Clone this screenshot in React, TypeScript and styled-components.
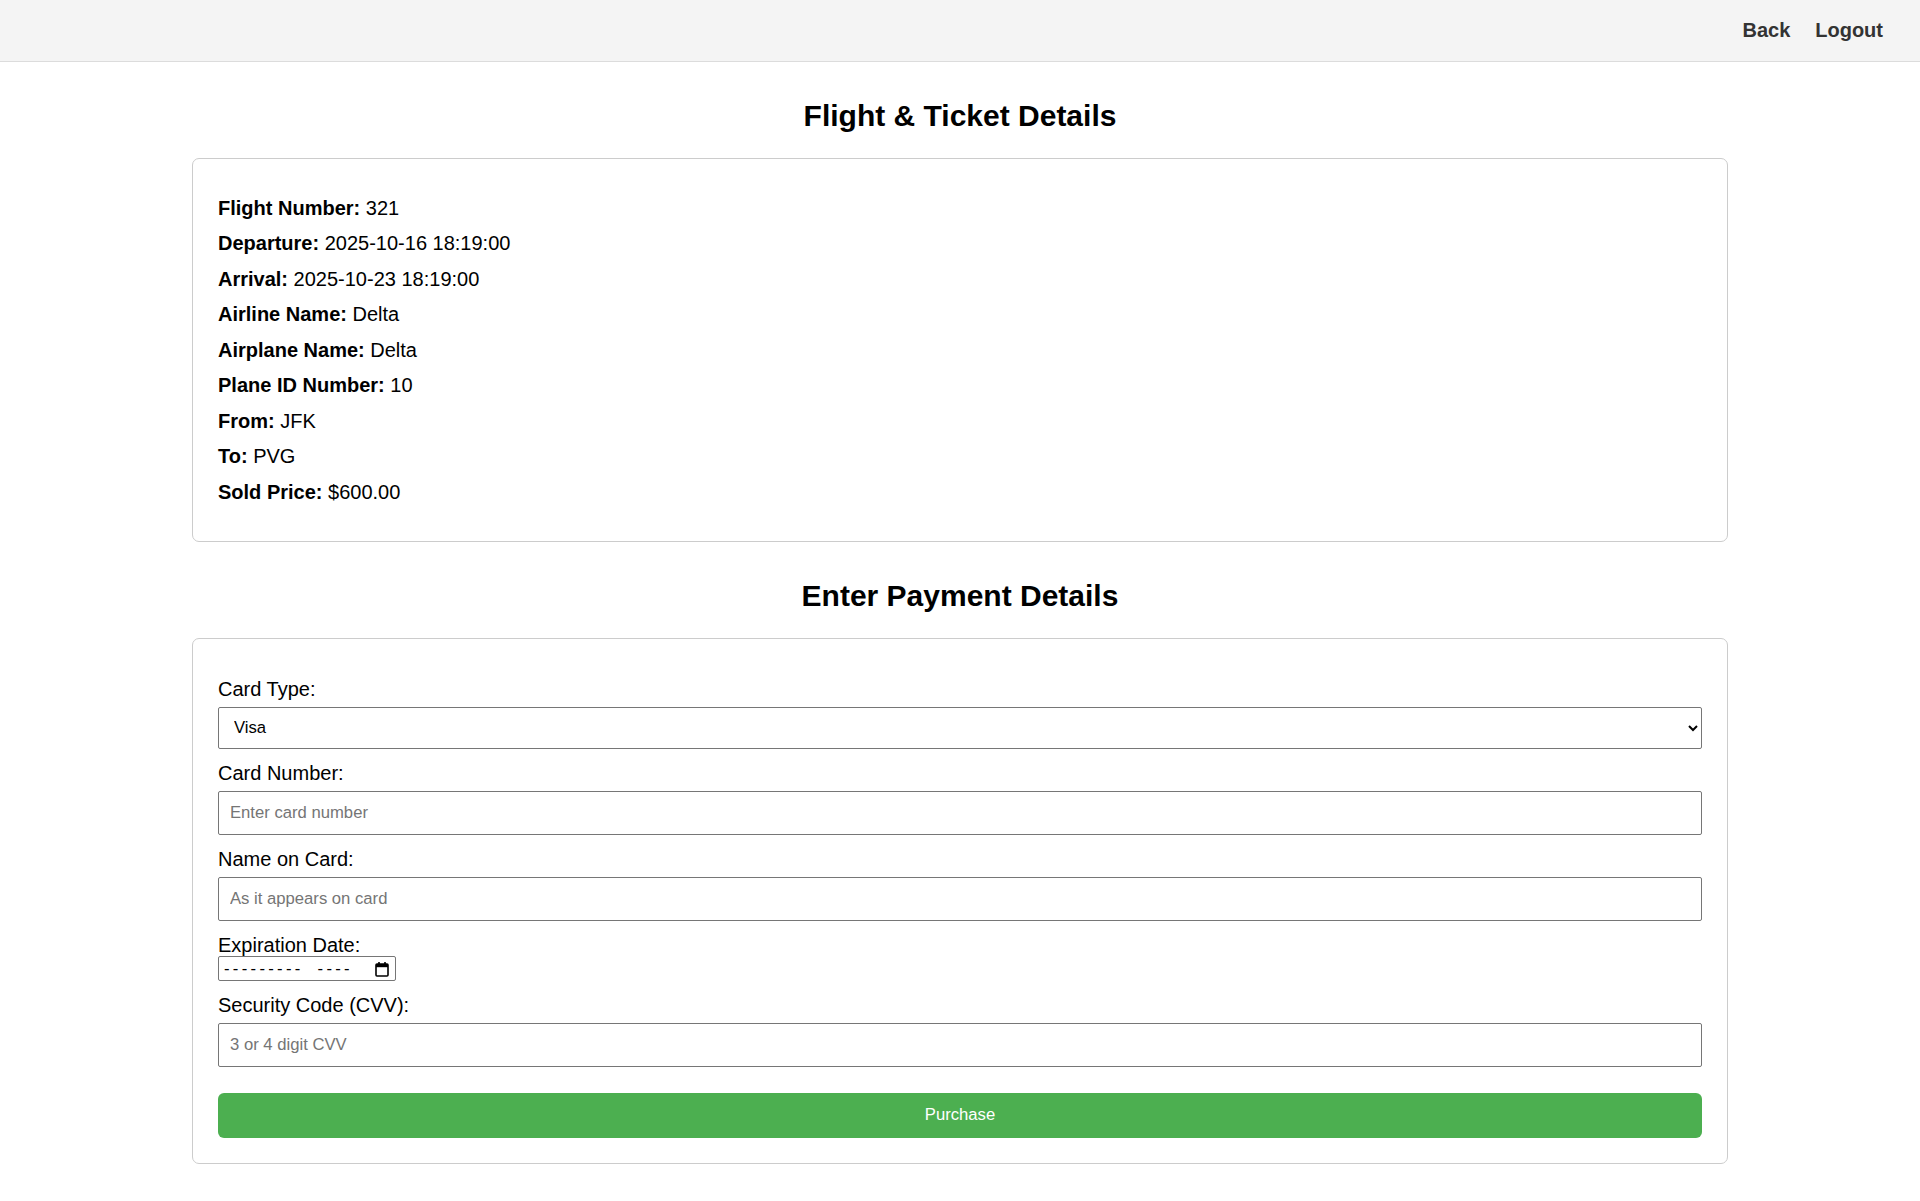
import React from "react";
import styled, { createGlobalStyle } from "styled-components";

const GlobalStyle = createGlobalStyle`
  html, body {
    margin: 0;
    padding: 0;
    background: #ffffff;
    font-family: "Liberation Sans", Arial, sans-serif;
    color: #000;
  }
  * { box-sizing: border-box; }
`;

const Header = styled.header`
  display: flex;
  justify-content: flex-end;
  align-items: center;
  gap: 25px;
  height: 62px;
  padding: 0 37px;
  background: #f4f4f4;
  border-bottom: 1px solid #dcdcdc;
`;

const NavLink = styled.a`
  font-size: 20px;
  font-weight: bold;
  color: #333;
  text-decoration: none;
  cursor: pointer;
  line-height: 23px;
`;

const Main = styled.main`
  width: 1536px;
  margin: 0 auto;
  display: flex;
  flex-direction: column;
`;

const Title = styled.h2`
  margin: 36.5px 0 25px;
  font-size: 30px;
  line-height: 34.5px;
  font-weight: bold;
  text-align: center;
  color: #000;
`;

const Card = styled.section`
  border: 1px solid #cccccc;
  border-radius: 7px;
  padding: 25px 25px;
  background: #fff;
`;

const InfoLine = styled.p`
  margin: 12.5px 0;
  font-size: 20px;
  line-height: 23px;
`;

const Form = styled.form`
  display: flex;
  flex-direction: column;
  padding: 13.5px 0 0;
`;

const Field = styled.div<{ $tight?: boolean }>`
  display: flex;
  flex-direction: column;
  align-items: flex-start;
  gap: ${(p) => (p.$tight ? "0px" : "6px")};
  margin-bottom: 13px;
`;

const Label = styled.label`
  font-size: 20px;
  line-height: 23px;
`;

const controlBase = `
  width: 100%;
  height: 44px;
  font-family: "Liberation Sans", Arial, sans-serif;
  font-size: 16.67px;
  border: 1px solid #767676;
  border-radius: 2px;
  background: #fff;
  color: #000;
`;

const Select = styled.select`
  ${controlBase}
  height: 42.5px;
  padding: 0 10px 0 11px;
`;

const TextInput = styled.input`
  ${controlBase}
  padding: 0 11px;
  &::placeholder {
    color: #757575;
  }
`;

const MonthBox = styled.div`
  display: flex;
  align-items: center;
  justify-content: space-between;
  width: 178px;
  height: 25px;
  margin-top: -1px;
  padding: 0 6px 0 5px;
  border: 1px solid #767676;
  border-radius: 2px;
  background: #fff;
  cursor: text;
`;

const MonthText = styled.span`
  font-family: "Liberation Sans", Arial, sans-serif;
  font-size: 16.67px;
  letter-spacing: 3.3px;
  word-spacing: 6px;
  white-space: pre;
  color: #000;
`;

const CalendarIcon = () => (
  <svg width="14" height="16" viewBox="0 0 14 16" aria-hidden="true">
    <rect x="1" y="3" width="12" height="12" rx="1" fill="none" stroke="#000" strokeWidth="1.6" />
    <rect x="1" y="3" width="12" height="3.2" fill="#000" />
    <rect x="3.2" y="1" width="1.6" height="3" fill="#000" />
    <rect x="9.2" y="1" width="1.6" height="3" fill="#000" />
  </svg>
);

const PurchaseButton = styled.button`
  margin-top: 13px;
  width: 100%;
  height: 44.5px;
  border: none;
  border-radius: 6px;
  background: #4caf50;
  color: #fff;
  font-family: "Liberation Sans", Arial, sans-serif;
  font-size: 16.67px;
  cursor: pointer;
`;

const details: [string, string][] = [
  ["Flight Number:", "321"],
  ["Departure:", "2025-10-16 18:19:00"],
  ["Arrival:", "2025-10-23 18:19:00"],
  ["Airline Name:", "Delta"],
  ["Airplane Name:", "Delta"],
  ["Plane ID Number:", "10"],
  ["From:", "JFK"],
  ["To:", "PVG"],
  ["Sold Price:", "$600.00"],
];

export default function App() {
  return (
    <>
      <GlobalStyle />
      <Header>
        <NavLink>Back</NavLink>
        <NavLink>Logout</NavLink>
      </Header>
      <Main>
        <Title>Flight &amp; Ticket Details</Title>
        <Card>
          {details.map(([k, v]) => (
            <InfoLine key={k}>
              <strong>{k}</strong> {v}
            </InfoLine>
          ))}
        </Card>
        <Title>Enter Payment Details</Title>
        <Card>
          <Form onSubmit={(e) => e.preventDefault()}>
            <Field>
              <Label htmlFor="cardType">Card Type:</Label>
              <Select id="cardType" defaultValue="Visa">
                <option>Visa</option>
                <option>MasterCard</option>
                <option>American Express</option>
                <option>Discover</option>
              </Select>
            </Field>
            <Field>
              <Label htmlFor="cardNumber">Card Number:</Label>
              <TextInput id="cardNumber" type="text" placeholder="Enter card number" />
            </Field>
            <Field>
              <Label htmlFor="nameOnCard">Name on Card:</Label>
              <TextInput id="nameOnCard" type="text" placeholder="As it appears on card" />
            </Field>
            <Field $tight>
              <Label>Expiration Date:</Label>
              <MonthBox role="textbox" aria-label="Expiration Date">
                <MonthText>{"--------- ----"}</MonthText>
                <CalendarIcon />
              </MonthBox>
            </Field>
            <Field>
              <Label htmlFor="cvv">Security Code (CVV):</Label>
              <TextInput id="cvv" type="text" placeholder="3 or 4 digit CVV" />
            </Field>
            <PurchaseButton type="submit">Purchase</PurchaseButton>
          </Form>
        </Card>
      </Main>
    </>
  );
}
